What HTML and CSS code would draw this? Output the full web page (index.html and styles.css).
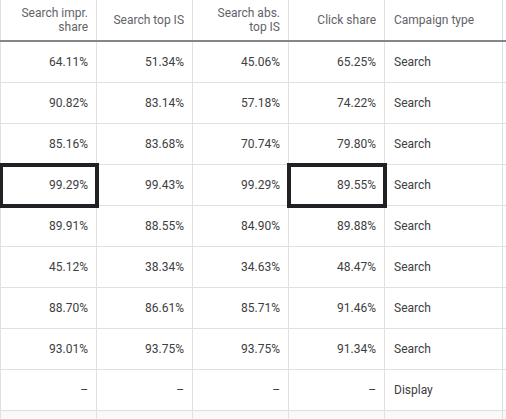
FILE: index.html
```html
<!DOCTYPE html>
<html>
<head>
<meta charset="utf-8">
<link rel="stylesheet" href="styles.css">
</head>
<body>
<table class="grid">
  <colgroup>
    <col class="c-num"><col class="c-num"><col class="c-num"><col class="c-num"><col class="c-type"><col class="c-extra">
  </colgroup>
  <thead>
    <tr>
      <th class="num">Search impr.<br>share</th>
      <th class="num">Search top IS</th>
      <th class="num">Search abs.<br>top IS</th>
      <th class="num">Click share</th>
      <th class="txt">Campaign type</th>
      <th class="ex"></th>
    </tr>
  </thead>
  <tbody>
    <tr><td class="num">64.11%</td><td class="num">51.34%</td><td class="num">45.06%</td><td class="num">65.25%</td><td class="txt">Search</td><td class="ex"></td></tr>
    <tr><td class="num">90.82%</td><td class="num">83.14%</td><td class="num">57.18%</td><td class="num">74.22%</td><td class="txt">Search</td><td class="ex"></td></tr>
    <tr><td class="num">85.16%</td><td class="num">83.68%</td><td class="num">70.74%</td><td class="num">79.80%</td><td class="txt">Search</td><td class="ex"></td></tr>
    <tr><td class="num hl">99.29%</td><td class="num">99.43%</td><td class="num">99.29%</td><td class="num hl">89.55%</td><td class="txt">Search</td><td class="ex"></td></tr>
    <tr><td class="num">89.91%</td><td class="num">88.55%</td><td class="num">84.90%</td><td class="num">89.88%</td><td class="txt">Search</td><td class="ex"></td></tr>
    <tr><td class="num">45.12%</td><td class="num">38.34%</td><td class="num">34.63%</td><td class="num">48.47%</td><td class="txt">Search</td><td class="ex"></td></tr>
    <tr><td class="num">88.70%</td><td class="num">86.61%</td><td class="num">85.71%</td><td class="num">91.46%</td><td class="txt">Search</td><td class="ex"></td></tr>
    <tr><td class="num">93.01%</td><td class="num">93.75%</td><td class="num">93.75%</td><td class="num">91.34%</td><td class="txt">Search</td><td class="ex"></td></tr>
    <tr><td class="num">–</td><td class="num">–</td><td class="num">–</td><td class="num">–</td><td class="txt">Display</td><td class="ex"></td></tr>
    <tr class="foot"><td></td><td></td><td></td><td></td><td></td><td class="ex"></td></tr>
  </tbody>
</table>
</body>
</html>
```

FILE: styles.css
```css
html, body {
  margin: 0;
  padding: 0;
  background: #fff;
  overflow: hidden;
}
.grid {
  border-collapse: collapse;
  table-layout: fixed;
  width: 506px;
  font-family: Roboto, "Liberation Sans", sans-serif;
  font-size: 12px;
  color: #3c4043;
}
.c-num { width: 96px; }
.c-type { width: 118px; }
.c-extra { width: 4px; }
.grid th, .grid td {
  border-left: 1px solid #e0e0e0;
  border-right: 1px solid #e0e0e0;
  padding: 0 8px 0 8px;
  white-space: nowrap;
}
.grid th {
  height: 40px;
  font-weight: 400;
  color: #5f6368;
  line-height: 14px;
  border-bottom: 2px solid #80868b;
  vertical-align: middle;
}
.grid td {
  height: 40px;
  border-bottom: 1px solid #e0e0e0;
  vertical-align: middle;
}
.grid .ex {
  padding: 0;
  border-right: 0;
}
.num { text-align: right; }
.txt { text-align: left; }
.grid td.txt, .grid th.txt { padding-left: 9px; }
.hl {
  outline: 4px solid #202124;
  outline-offset: -2px;
}
.foot td {
  height: 20px;
  background: #f8f9fa;
}
```
